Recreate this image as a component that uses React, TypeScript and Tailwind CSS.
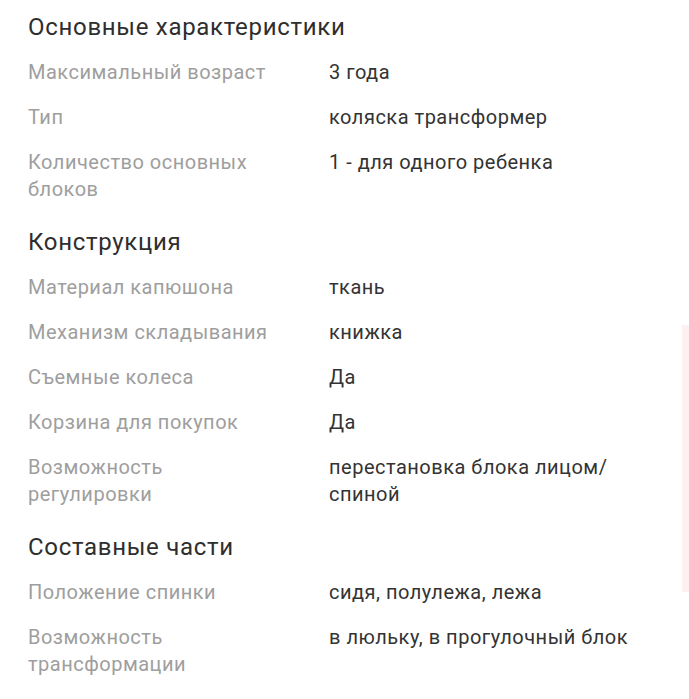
import React from 'react'

type Row = { label: React.ReactNode; value: React.ReactNode }
type Section = { title: string; rows: Row[] }

const sections: Section[] = [
  {
    title: 'Основные характеристики',
    rows: [
      { label: 'Максимальный возраст', value: '3 года' },
      { label: 'Тип', value: 'коляска трансформер' },
      { label: 'Количество основных блоков', value: '1 - для одного ребенка' },
    ],
  },
  {
    title: 'Конструкция',
    rows: [
      { label: 'Материал капюшона', value: 'ткань' },
      { label: 'Механизм складывания', value: 'книжка' },
      { label: 'Съемные колеса', value: 'Да' },
      { label: 'Корзина для покупок', value: 'Да' },
      {
        label: 'Возможность регулировки',
        value: (
          <>
            перестановка блока лицом/<wbr />спиной
          </>
        ),
      },
    ],
  },
  {
    title: 'Составные части',
    rows: [
      { label: 'Положение спинки', value: 'сидя, полулежа, лежа' },
      { label: 'Возможность трансформации', value: 'в люльку, в прогулочный блок' },
    ],
  },
]

export default function App() {
  return (
    <div className="relative min-h-[699px] bg-white px-[28px] font-['Roboto',sans-serif]">
      {sections.map((s, i) => (
        <div key={s.title}>
          {/* section title */}
          <h2
            className={`${i === 0 ? 'pt-[11px]' : 'pt-[14px]'} pb-[7px] text-[24px] leading-[32px] tracking-[0.7px] text-[#2e2e2e]`}
          >
            {s.title}
          </h2>
          {s.rows.map((r, j) => (
            <div key={j} className="flex py-[9px] text-[20px] leading-[27px] tracking-[0.5px]">
              <div className="w-[301px] shrink-0 pr-[40px] text-[#9e9e9e]">{r.label}</div>
              <div className="flex-1 text-[#333333]">{r.value}</div>
            </div>
          ))}
        </div>
      ))}

      {/* faint scroll indicator */}
      <div className="absolute right-0 top-[325px] h-[267px] w-[7px] bg-[#fdf0f0]" />
    </div>
  )
}
